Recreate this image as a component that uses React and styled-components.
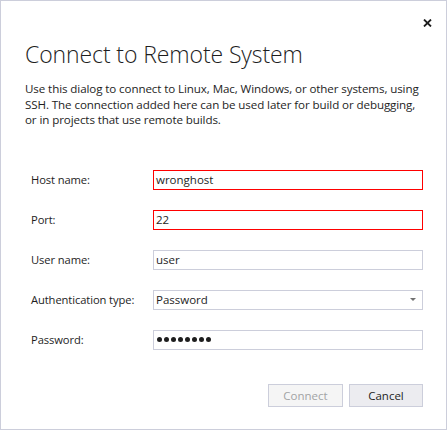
import React from 'react';
import styled, { createGlobalStyle } from 'styled-components';

const GlobalStyle = createGlobalStyle`
  html, body {
    margin: 0;
    padding: 0;
    background: #ffffff;
  }
  body {
    font-family: "Open Sans", "Noto Sans", sans-serif;
    color: #1e1e1e;
  }
`;

const Dialog = styled.div`
  box-sizing: border-box;
  width: 447px;
  height: 430px;
  border: 1px solid #cccedb;
  background: #ffffff;
  display: flex;
  flex-direction: column;
  padding: 0 23px 0 24px;
`;

const CloseBar = styled.div`
  display: flex;
  justify-content: flex-end;
  padding-top: 16px;
  margin-right: -10px;
  height: 12px;
`;

const CloseButton = styled.button`
  width: 12px;
  height: 12px;
  border: 0;
  padding: 0;
  background: transparent;
  display: flex;
  align-items: center;
  justify-content: center;
`;

const Title = styled.h1`
  margin: 10px 0 0 0;
  font-size: 23px;
  font-weight: 300;
  line-height: 30px;
  letter-spacing: -0.1px;
  color: #1e1e1e;
`;

const Description = styled.p`
  margin: 12px 0 0 0;
  font-size: 11.6px;
  line-height: 15.5px;
  letter-spacing: -0.1px;
  white-space: nowrap;
  color: #1e1e1e;
`;

const Form = styled.div`
  margin-top: 42px;
  padding-left: 6px;
  display: grid;
  grid-template-columns: 122px 1fr;
  grid-auto-rows: 20px;
  row-gap: 20px;
  align-items: center;
`;

const Label = styled.div`
  font-size: 11.2px;
  letter-spacing: -0.1px;
  color: #1e1e1e;
`;

const Field = styled.div`
  box-sizing: border-box;
  height: 20px;
  border: 1px solid ${(p) => (p.invalid ? '#ff0000' : '#cccedb')};
  background: #ffffff;
  display: flex;
  align-items: center;
  padding: 0 6px 0 2px;
  font-size: 11.5px;
  color: #1e1e1e;
  justify-content: space-between;
`;

const Dots = styled.div`
  display: flex;
  gap: 2px;
  padding-left: 1px;
  span {
    width: 5px;
    height: 5px;
    border-radius: 50%;
    background: #1e1e1e;
  }
`;

const Caret = styled.span`
  width: 0;
  height: 0;
  border-left: 3px solid transparent;
  border-right: 3px solid transparent;
  border-top: 3px solid #717171;
`;

const Footer = styled.div`
  margin-top: 34px;
  display: flex;
  justify-content: flex-end;
  gap: 6px;
`;

const Button = styled.button`
  box-sizing: border-box;
  width: ${(p) => (p.wide ? '75px' : '74px')};
  height: 23px;
  font-family: "Open Sans", "Noto Sans", sans-serif;
  font-size: 11.5px;
  border: 1px solid #cccedb;
  background: ${(p) => (p.disabled ? '#f5f5f5' : '#ececf0')};
  color: ${(p) => (p.disabled ? '#a2a4a5' : '#1e1e1e')};
  padding: 0;
`;

export default function App() {
  return (
    <>
      <GlobalStyle />
      <Dialog>
        <CloseBar>
          <CloseButton aria-label="Close">
            <svg width="9" height="8" viewBox="0 0 9 8">
              <path d="M1 0.5 L8 7.5 M8 0.5 L1 7.5" stroke="#1e1e1e" strokeWidth="1.8" />
            </svg>
          </CloseButton>
        </CloseBar>
        <Title>Connect to Remote System</Title>
        <Description>
          Use this dialog to connect to Linux, Mac, Windows, or other systems, using
          <br />
          SSH. The connection added here can be used later for build or debugging,
          <br />
          or in projects that use remote builds.
        </Description>
        <Form>
          <Label>Host name:</Label>
          <Field invalid>wronghost</Field>
          <Label>Port:</Label>
          <Field invalid>22</Field>
          <Label>User name:</Label>
          <Field>user</Field>
          <Label>Authentication type:</Label>
          <Field>
            Password
            <Caret />
          </Field>
          <Label>Password:</Label>
          <Field>
            <Dots>
              {Array.from({ length: 8 }).map((_, i) => (
                <span key={i} />
              ))}
            </Dots>
          </Field>
        </Form>
        <Footer>
          <Button wide disabled>Connect</Button>
          <Button>Cancel</Button>
        </Footer>
      </Dialog>
    </>
  );
}
